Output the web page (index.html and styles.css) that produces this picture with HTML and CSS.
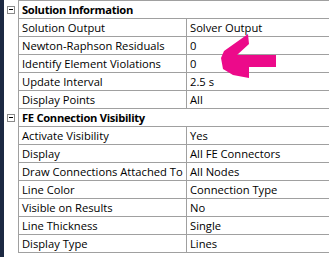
FILE: index.html
```html
<!DOCTYPE html>
<html lang="en">
<head>
    <meta charset="UTF-8">
    <title>Details - Solution Information</title>
    <link rel="stylesheet" href="styles.css">
</head>
<body>
    <div class="panel">
        <div class="strip"></div>
        <div class="grid">
            <div class="row header">
                <div class="gutter"><span class="toggle"></span></div>
                <div class="cell label wide">Solution Information</div>
            </div>
            <div class="row">
                <div class="gutter"></div>
                <div class="cell label">Solution Output</div>
                <div class="cell value">Solver Output</div>
            </div>
            <div class="row">
                <div class="gutter"></div>
                <div class="cell label">Newton-Raphson Residuals</div>
                <div class="cell value">0</div>
            </div>
            <div class="row">
                <div class="gutter"></div>
                <div class="cell label">Identify Element Violations</div>
                <div class="cell value">0</div>
            </div>
            <div class="row">
                <div class="gutter"></div>
                <div class="cell label">Update Interval</div>
                <div class="cell value">2.5 s</div>
            </div>
            <div class="row">
                <div class="gutter"></div>
                <div class="cell label">Display Points</div>
                <div class="cell value">All</div>
            </div>
            <div class="row header">
                <div class="gutter"><span class="toggle"></span></div>
                <div class="cell label wide">FE Connection Visibility</div>
            </div>
            <div class="row">
                <div class="gutter"></div>
                <div class="cell label">Activate Visibility</div>
                <div class="cell value">Yes</div>
            </div>
            <div class="row">
                <div class="gutter"></div>
                <div class="cell label">Display</div>
                <div class="cell value">All FE Connectors</div>
            </div>
            <div class="row">
                <div class="gutter"></div>
                <div class="cell label">Draw Connections Attached To</div>
                <div class="cell value">All Nodes</div>
            </div>
            <div class="row">
                <div class="gutter"></div>
                <div class="cell label">Line Color</div>
                <div class="cell value">Connection Type</div>
            </div>
            <div class="row">
                <div class="gutter"></div>
                <div class="cell label">Visible on Results</div>
                <div class="cell value">No</div>
            </div>
            <div class="row">
                <div class="gutter"></div>
                <div class="cell label">Line Thickness</div>
                <div class="cell value">Single</div>
            </div>
            <div class="row">
                <div class="gutter"></div>
                <div class="cell label">Display Type</div>
                <div class="cell value">Lines</div>
            </div>
        </div>

        <!-- hand-drawn pointer over the table -->
        <svg class="arrow" width="329" height="257" viewBox="0 0 329 257">
            <path d="M248 34 L249 44 L237 55 L276 55 L276 67 L249 67 L249 78 L233 75 L223 69 L221 58 L224 51 Z" fill="#ec0a8a"/>
        </svg>
    </div>
</body>
</html>
```
FILE: styles.css
```css
body {
    margin: 0;
    background: #fff;
    font-family: "Open Sans", "Noto Sans", sans-serif;
    font-size: 11.2px;
    color: #000;
}
.panel {
    position: relative;
    display: flex;
    width: 329px;
    height: 257px;
    overflow: hidden;
}
.strip {
    width: 4px;
    background: #1c2942;
}
.grid {
    flex: 1;
    display: flex;
    flex-direction: column;
}
.row {
    display: grid;
    grid-template-columns: 14px 168px 1fr;
    height: 18px;
}
.row:first-child .cell {
    border-top: 1px solid #a0a0a0;
}
.row:first-child {
    height: 19px;
}
.gutter {
    display: flex;
    align-items: center;
    justify-content: center;
}
.toggle {
    position: relative;
    width: 8px;
    height: 8px;
    box-sizing: border-box;
    border: 1px solid #8a8a8a;
    background: #fff;
}
.toggle::after {
    content: "";
    position: absolute;
    left: 1px;
    top: 2px;
    width: 4px;
    height: 1px;
    background: #000;
}
.cell {
    border-left: 1px solid #a0a0a0;
    border-bottom: 1px solid #a0a0a0;
    padding-left: 3px;
    line-height: 17px;
    white-space: nowrap;
    overflow: hidden;
}
.wide {
    grid-column: 2 / 4;
    font-weight: bold;
    letter-spacing: -0.3px;
}
.arrow {
    position: absolute;
    left: 0;
    top: 0;
    pointer-events: none;
}
```
